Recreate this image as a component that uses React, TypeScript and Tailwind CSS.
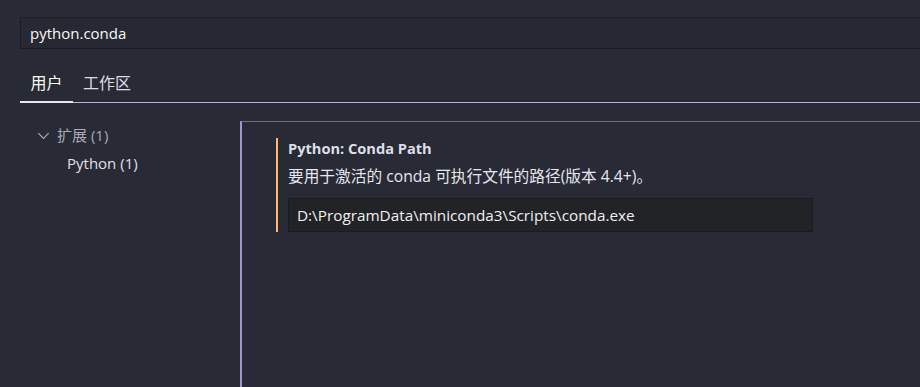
export default function App() {
    return (
        <div className="w-[920px] h-[387px] overflow-hidden bg-[#282a36] text-[#f8f8f2] relative" style={{ fontFamily: '"Segoe UI", "Open Sans", "Noto Sans CJK SC", sans-serif' }}>
            <div className="pt-[17px] pl-5">
                <div className="h-[32px] w-[920px] bg-[#262834] border border-[#1b1c24] flex items-center pl-[9px] text-[15px]">
                    python.conda
                </div>
            </div>
            <div className="pl-5 mt-[17px] flex items-end">
                <div className="w-[53px] h-[37px] border-b-2 border-[#e8e6f0] flex items-start justify-center pt-[5px] text-[16px]">用户</div>
                <div className="flex-1 h-[37px] border-b border-[#bbaee0] pl-[10px] pt-[5px] text-[16px] text-[#dcdce4]">工作区</div>
            </div>
            <div className="flex mt-[18px]">
                <div className="w-[240px] shrink-0 pl-[36px] pt-[3px] text-[15px]">
                    <div className="flex items-center h-[22px] text-[#a9a9b4]">
                        <svg width="15" height="15" viewBox="0 0 16 16" className="mr-[6px]">
                            <path d="M2.5 5.5l5.5 5.5 5.5-5.5" fill="none" stroke="#a9a9b4" strokeWidth="1.3" />
                        </svg>
                        扩展 (1)
                    </div>
                    <div className="pl-[31px] h-[35px] flex items-center text-[#e0e0e6]">Python (1)</div>
                </div>
                <div className="flex-1 h-[267px] border-l-2 border-t border-l-[#9d97cc] border-t-[#6e6e7c] pt-[16px] pl-[34px]">
                    <div className="border-l-2 border-[#ffb86c] pl-[10px] pb-0">
                        <div className="text-[14.6px] font-bold text-[#dedee6] leading-[20px]">Python: Conda Path</div>
                        <div className="text-[15.7px] text-[#e6e6ec] leading-[20px] mt-[8px]">要用于激活的 conda 可执行文件的路径(版本 4.4+)。</div>
                        <div className="mt-[12px] w-[525px] h-[34px] bg-[#222327] border border-[#1a1b20] flex items-center pl-[8px] text-[15.3px] text-[#f0f0f0]">
                            D:\ProgramData\miniconda3\Scripts\conda.exe
                        </div>
                    </div>
                </div>
            </div>
        </div>
    )
}
